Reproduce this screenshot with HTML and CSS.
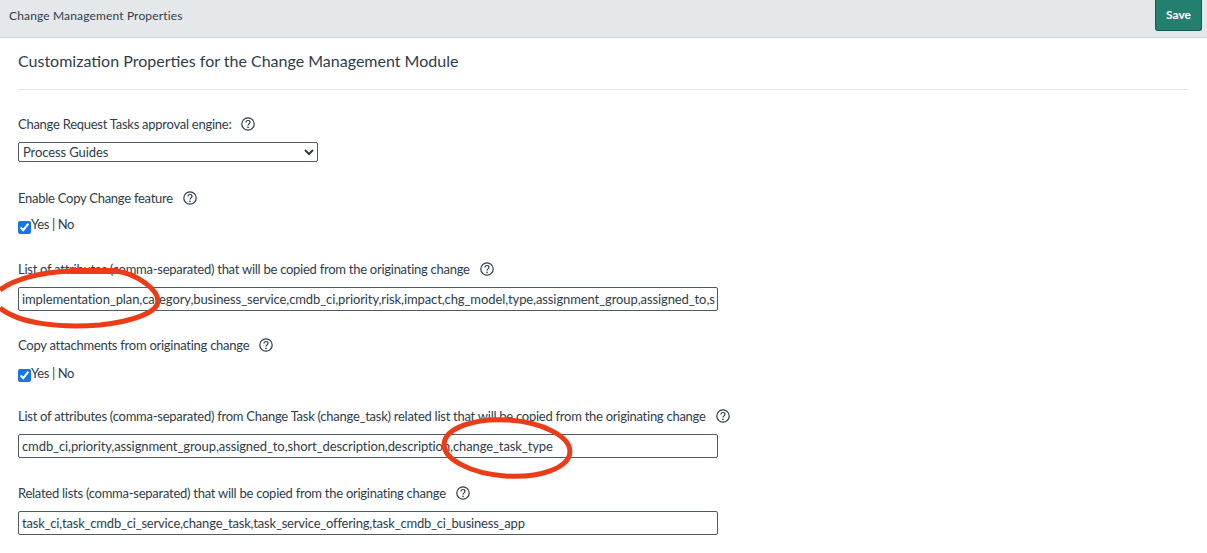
FILE: index.html
```html
<!DOCTYPE html>
<html lang="en">

<head>
  <meta charset="UTF-8">
  <title>Change Management Properties</title>
  <link rel="stylesheet" href="styles.css">
</head>

<body>
  <div id="header">
    <span>Change Management Properties</span>
    <button type="button" class="save">Save</button>
  </div>

  <form id="properties">
    <h1>Customization Properties for the Change Management Module</h1>

    <div class="field select-field">
      <label>Change Request Tasks approval engine: <svg class="help" viewBox="0 0 14 14"><circle cx="7" cy="7" r="6.2"/><path d="M5 5.4C5 4.2 5.9 3.5 7 3.5s2 .7 2 1.8c0 1.5-2 1.6-2 3.2"/><circle class="dot" cx="7" cy="10.4" r=".8"/></svg></label>
      <select>
        <option>Process Guides</option>
      </select>
    </div>

    <div class="field check-field">
      <label>Enable Copy Change feature <svg class="help" viewBox="0 0 14 14"><circle cx="7" cy="7" r="6.2"/><path d="M5 5.4C5 4.2 5.9 3.5 7 3.5s2 .7 2 1.8c0 1.5-2 1.6-2 3.2"/><circle class="dot" cx="7" cy="10.4" r=".8"/></svg></label>
      <div class="yes-no"><input type="checkbox" checked><span>Yes | No</span></div>
    </div>

    <div class="field text-field tall">
      <label>List of attributes (comma-separated) that will be copied from the originating change <svg class="help" viewBox="0 0 14 14"><circle cx="7" cy="7" r="6.2"/><path d="M5 5.4C5 4.2 5.9 3.5 7 3.5s2 .7 2 1.8c0 1.5-2 1.6-2 3.2"/><circle class="dot" cx="7" cy="10.4" r=".8"/></svg></label>
      <input type="text" value="implementation_plan,category,business_service,cmdb_ci,priority,risk,impact,chg_model,type,assignment_group,assigned_to,short_description,description">
    </div>

    <div class="field check-field lower">
      <label>Copy attachments from originating change <svg class="help" viewBox="0 0 14 14"><circle cx="7" cy="7" r="6.2"/><path d="M5 5.4C5 4.2 5.9 3.5 7 3.5s2 .7 2 1.8c0 1.5-2 1.6-2 3.2"/><circle class="dot" cx="7" cy="10.4" r=".8"/></svg></label>
      <div class="yes-no"><input type="checkbox" checked><span>Yes | No</span></div>
    </div>

    <div class="field text-field">
      <label>List of attributes (comma-separated) from Change Task (change_task) related list that will be copied from the originating change <svg class="help" viewBox="0 0 14 14"><circle cx="7" cy="7" r="6.2"/><path d="M5 5.4C5 4.2 5.9 3.5 7 3.5s2 .7 2 1.8c0 1.5-2 1.6-2 3.2"/><circle class="dot" cx="7" cy="10.4" r=".8"/></svg></label>
      <input type="text" value="cmdb_ci,priority,assignment_group,assigned_to,short_description,description,change_task_type">
    </div>

    <div class="field text-field last">
      <label>Related lists (comma-separated) that will be copied from the originating change <svg class="help" viewBox="0 0 14 14"><circle cx="7" cy="7" r="6.2"/><path d="M5 5.4C5 4.2 5.9 3.5 7 3.5s2 .7 2 1.8c0 1.5-2 1.6-2 3.2"/><circle class="dot" cx="7" cy="10.4" r=".8"/></svg></label>
      <input type="text" value="task_ci,task_cmdb_ci_service,change_task,task_service_offering,task_cmdb_ci_business_app">
    </div>
  </form>

  <!-- red marker circles drawn over the screenshot -->
  <svg class="markup" viewBox="0 0 1207 553">
    <path d="M0 290C12 280 40 272 70 271L116 271C138 274 158 290 158 301C158 312 135 321 100 325C60 328 20 324 0 308"/>
    <path d="M70 271L118 271" class="strike"/>
    <ellipse cx="507" cy="448" rx="63" ry="28" transform="rotate(4 507 448)"/>
  </svg>
</body>

</html>
```

FILE: styles.css
```css
html,
body {
  margin: 0;
  padding: 0;
}

body {
  position: relative;
  height: 553px;
  overflow: hidden;
  background: #fff;
  color: #2e3d49;
  font-family: "Lato", "Noto Sans", sans-serif;
  font-size: 13px;
}

#header {
  display: flex;
  flex-direction: row;
  justify-content: space-between;
  box-sizing: border-box;
  height: 38px;
  padding: 0 5px 0 9px;
  background: #e4e8eb;
  border-bottom: 1px solid #ccd0d3;
  font-size: 12px;

  >span {
    margin-top: 8px;
    letter-spacing: 0.15px;
  }
}

.save {
  width: 47px;
  height: 31px;
  padding: 0 0 2px;
  border: 1px solid #17594c;
  border-top: 0;
  border-radius: 0 0 3px 3px;
  background: #237f6e;
  color: #fff;
  font-family: inherit;
  font-size: 12px;
  font-weight: 700;
}

#properties {
  margin: 0 19px 0 18px;

  h1 {
    box-sizing: border-box;
    height: 52px;
    margin: 0 0 25px;
    padding-top: 12px;
    border-bottom: 1px solid #e4e6e7;
    font-size: 16px;
    line-height: 21px;
    font-weight: 400;
  }
}

.field {
  >label {
    display: flex;
    align-items: center;
    gap: 10px;
    height: 18px;
    line-height: 18px;
    letter-spacing: -0.26px;
  }
}

.help {
  width: 14px;
  height: 14px;
  flex: none;
  fill: none;
  stroke: #2e3d49;
  stroke-width: 1.2;

  .dot {
    fill: #2e3d49;
    stroke: none;
  }
}

.select-field {
  margin-bottom: 27px;

  select {
    display: block;
    width: 300px;
    height: 20px;
    margin-top: 9px;
    padding: 0;
    border: 1px solid #4f5b64;
    border-radius: 2px;
    background: #fff;
    color: inherit;
    font-family: inherit;
    font-size: 13px;
    letter-spacing: -0.1px;
  }
}

.check-field {
  margin-bottom: 26px;

  .yes-no {
    display: flex;
    height: 18px;
    margin-top: 9px;
  }

  input {
    width: 13px;
    height: 13px;
    margin: 5px 0 0;
    accent-color: #1277ee;
  }

  span {
    font-size: 13px;
    line-height: 17px;
    letter-spacing: -0.4px;
  }
}

.lower {
  margin-bottom: 25px;

  .yes-no {
    margin-top: 10px;
  }

  span {
    line-height: 19px;
  }
}

.text-field {
  margin-bottom: 26px;

  input {
    display: block;
    box-sizing: border-box;
    width: 700px;
    height: 24px;
    margin-top: 9px;
    padding: 0 2px 0 3px;
    border: 1px solid #4f5b64;
    border-radius: 2px;
    color: inherit;
    font-family: inherit;
    font-size: 13px;
    letter-spacing: -0.1px;
  }
}

.tall {
  margin-bottom: 25px;
}

.last input {
  letter-spacing: -0.2px;
}

.markup {
  position: absolute;
  top: 0;
  left: 0;
  width: 1207px;
  height: 553px;
  pointer-events: none;
  fill: none;
  stroke: #ec3b17;
  stroke-width: 5;

  .strike {
    stroke-width: 6;
  }
}
```
